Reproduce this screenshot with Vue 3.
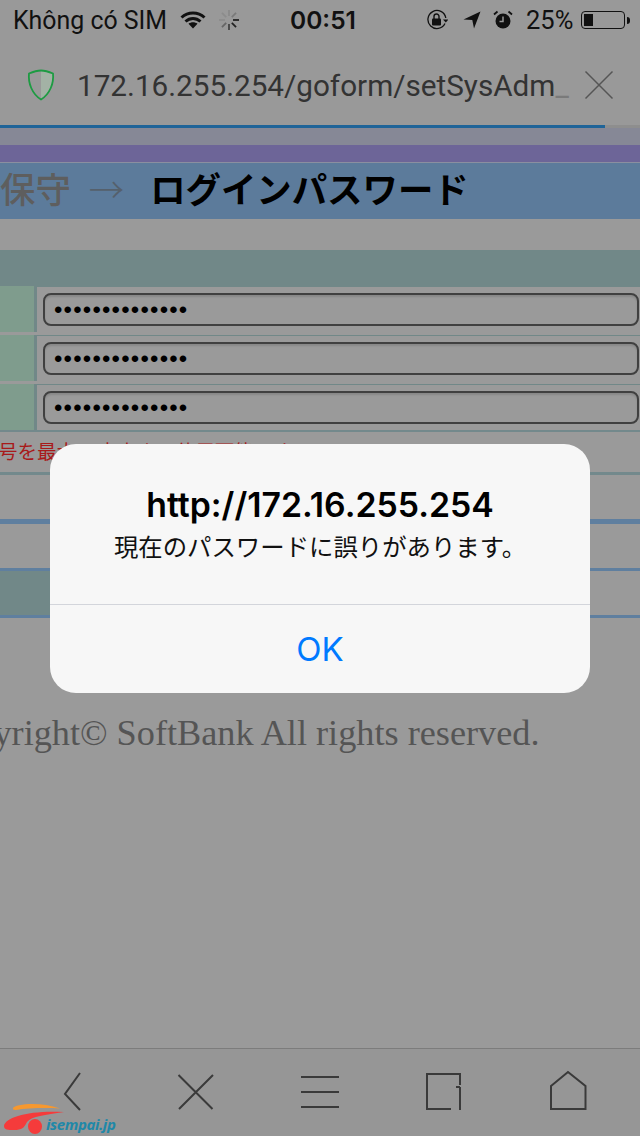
<script setup>
const rows = [1, 2, 3]
const spokes = [0, 45, 90, 135, 180, 225, 270, 315]
const spokeColors = ['#8a8a8a', '#7a7a7a', '#222', '#222', '#444', '#666', '#8c8c8c', '#8c8c8c']
</script>

<template>
  <div class="screen">
    <header class="status">
      <span class="carrier">Không có SIM</span>
      <svg class="wifi" width="26" height="18" viewBox="0 0 26 18">
        <path d="M1.500 6.500C8 .5 18 .5 24.500 6.500M5.500 10.500c4.500-4 10.500-4 15 0" fill="none" stroke="#111" stroke-width="3"/>
        <path d="M13 17.500l-4.500-4.700c2.600-2 6.400-2 9 0z" fill="#111"/>
      </svg>
      <svg class="spin" width="22" height="22" viewBox="0 0 22 22">
        <line v-for="(a, i) in spokes" :key="a" x1="11" y1="1" x2="11" y2="7" :stroke="spokeColors[i]" stroke-width="1.800" :transform="`rotate(${a} 11 11)`"/>
      </svg>
      <span class="time">00:51</span>
      <svg class="lock" width="22" height="22" viewBox="0 0 22 22">
        <path d="M19 14.500A9 9 0 1 1 19.800 9" fill="none" stroke="#111" stroke-width="1.300"/>
        <path d="M17 10.500h5.500l-2.700 3z" fill="#111"/>
        <rect x="6" y="9.500" width="9" height="7" rx="1" fill="#111"/>
        <path d="M8 10V7.500a2.500 2.500 0 0 1 5 0V10" fill="none" stroke="#111" stroke-width="1.400"/>
      </svg>
      <svg class="arrow" width="18" height="18" viewBox="0 0 18 18"><path d="M0.500 8.500L17.500 0.500L11 17.500L9.300 9z" fill="#111"/></svg>
      <svg class="alarm" width="20" height="20" viewBox="0 0 20 20">
        <circle cx="10" cy="11" r="7.500" fill="#111"/>
        <path d="M10 6.500V11.500H6.500" fill="none" stroke="#999" stroke-width="1.500"/>
        <path d="M1 4.500L4.500 1.500M19 4.500L15.500 1.500" stroke="#111" stroke-width="1.800"/>
      </svg>
      <span class="pct">25%</span>
      <span class="battery"><i></i></span>
      <span class="nub"></span>
    </header>

    <div class="urlbar">
      <svg class="shield" width="28" height="32" viewBox="0 0 28 32">
        <path d="M14 2C18 2 22 3 26 4.500C27 14 23 25 14 30.500Z" fill="#a3b2a5"/>
        <path d="M14 1.500C10 1.500 6 2.800 2 4.500C1 14 5 25 14 30.500C23 25 27 14 26 4.500C22 2.800 18 1.500 14 1.500Z" fill="none" stroke="#1d9b42" stroke-width="1.800"/>
      </svg>
      <span class="url">172.16.255.254/goform/setSysAdm<span class="fade">_</span></span>
      <svg class="close" width="30" height="30" viewBox="0 0 30 30"><path d="M1.500 1.500L28.500 28.500M28.500 1.500L1.500 28.500" stroke="#555" stroke-width="1.500"/></svg>
    </div>
    <div class="track"><div class="progress"></div></div>

    <main class="page">
      <div class="strip"></div>
      <div class="purple"></div>
      <h1 class="crumb">
        <span class="muted">保守</span>
        <span class="sep">→</span>
        <span class="current">ログインパスワード</span>
      </h1>
      <div class="spacer"></div>
      <div class="table-head"></div>
      <div v-for="r in rows" :key="r" class="row">
        <div class="label"></div>
        <div class="field"><div class="input">••••••••••••••</div></div>
      </div>
      <div class="rule teal tail"></div>
      <div class="note">号を最大15文字まで使用可能です</div>
      <div class="rule teal"></div>
      <div class="blank"></div>
      <div class="rule blue"></div>
      <div class="blank"></div>
      <div class="rule blue thin"></div>
      <div class="blank"><div class="band"></div></div>
      <div class="rule blue thin"></div>
      <p class="copy">Copyright© SoftBank All rights reserved.</p>
    </main>

    <footer class="toolbar">
      <svg width="640" height="87" viewBox="0 0 640 87" fill="none" stroke="#3a3a3a" stroke-width="2">
        <path d="M80 24L65 45L80 61"/>
        <path d="M178.500 26L212.500 60M213 26L179 60"/>
        <path d="M301 28H339M301 43H339M301 58H339"/>
        <path d="M460 36V25H427V60H451M460 38H456M460 38V61"/>
        <path d="M551 37L568 23L585.500 37V60H551Z"/>
      </svg>
    </footer>

    <div class="overlay">
      <div class="dialog">
        <div class="body">
          <div class="title">http://172.16.255.254</div>
          <div class="msg">現在のパスワードに誤りがあります。</div>
        </div>
        <div class="ok">OK</div>
      </div>
    </div>

    <div class="mark">
      <svg width="66" height="34" viewBox="0 0 66 34">
        <path d="M13 6C15 2 40-1 60 6.500C46 5.500 28 6 16 8C13 8 13 7 13 6Z" fill="#f6982f"/>
        <path d="M4 24C5 15 30 8 64 10C45 13 32 14 27 20C24 26 22 28 14 28C8 28 4 28 4 24Z" fill="#f53b3b"/>
        <ellipse cx="35" cy="24.500" rx="7" ry="7.500" fill="#f53b3b"/>
      </svg>
      <span class="mark-text">isempai.jp</span>
    </div>
  </div>
</template>

<style>
html, body { margin: 0; background: #999; }
</style>

<style scoped>
.screen {
  position: relative;
  width: 640px;
  height: 1136px;
  overflow: hidden;
  display: flex;
  flex-direction: column;
  background: #999;
  font-family: "Inter", "Noto Sans CJK JP", sans-serif;
  color: #111;
}
.status {
  height: 40px;
  display: flex;
  align-items: center;
  padding-left: 13px;
  flex: none;
}
.carrier { font-size: 24.900px; width: 167px; white-space: nowrap; font-family: Roboto, sans-serif; }
.spin { margin-left: 12px; }
.time { font-size: 24.500px; font-weight: 600; margin-left: 50px; width: 66px; white-space: nowrap; }
.lock { margin-left: 70px; }
.arrow { margin-left: 15px; }
.alarm { margin-left: 12px; }
.pct { font-size: 25.500px; margin-left: 13px; font-family: Roboto, sans-serif; width: 55px; white-space: nowrap; }
.battery {
  width: 44px;
  height: 18px;
  box-sizing: border-box;
  border: 1.500px solid #111;
  border-radius: 4px;
  padding: 2px;
  display: flex;
}
.battery i { width: 9px; background: #111; }
.nub { width: 3px; height: 7px; margin-left: 2px; background: #111; border-radius: 0 3px 3px 0; }

.urlbar {
  height: 85px;
  display: flex;
  align-items: center;
  flex: none;
  padding-left: 27px;
  box-sizing: border-box;
  padding-top: 5px;
}
.url { font-size: 29.700px; color: #333; margin-left: 22px; width: 507px; white-space: nowrap; overflow: hidden; font-family: Roboto, sans-serif; }
.fade { color: #7a7a7a; }
.close { flex: none; }
.track { height: 3px; background: #8e8e8e; flex: none; }
.progress { width: 605px; height: 100%; background: #1f6498; }

.page { flex: 1; min-height: 0; overflow: hidden; background: #9a9a9a; }
.strip { height: 17px; background: #868896; }
.purple { height: 17px; background: #6d6598; border-bottom: 1px solid #8a8fa0; }
.crumb {
  height: 56px;
  margin: 0;
  padding-bottom: 6px;
  box-sizing: border-box;
  background: #5c7b9b;
  display: flex;
  align-items: center;
  font-size: 35.400px;
  line-height: 1;
  font-weight: 700;
  white-space: nowrap;
  font-family: "Noto Sans CJK JP", sans-serif;
}
.muted { color: #5e5e5e; font-weight: 500; }
.sep { color: #55606c; font-weight: 300; margin-left: 18px; }
.current { color: #000; margin-left: 26px; font-weight: 700; }
.spacer { height: 31px; }
.table-head { height: 36px; background: #718888; }
.row { height: 46px; display: flex; gap: 3px; background: #718888; }
.row + .row { margin-top: 3px; }
.label { width: 34px; background: #7f9c8d; }
.field { flex: 1; background: #9a9a9a; padding: 7px 0 0 6px; min-width: 0; box-shadow: inset 0 1px 0 #718888; }
.input {
  height: 33px;
  box-sizing: border-box;
  border: 2px solid #404040;
  border-radius: 8px;
  margin-right: 1px;
  padding-left: 9px;
  line-height: 29px;
  font-size: 24px;
  letter-spacing: 1.200px;
  color: #000;
  white-space: nowrap;
  font-family: "Liberation Sans", sans-serif;
  box-shadow: inset 0 2px 2px rgba(0, 0, 0, 0.12);
}
.note { height: 40px; margin-left: -2px; padding-top: 7px; box-sizing: border-box; font-size: 19.500px; line-height: 24px; color: #a81a1a; white-space: nowrap; font-family: "Noto Sans CJK JP", sans-serif; }
.rule { height: 3px; }
.rule.teal { background: #73898c; }
.rule.teal.tail { height: 2px; }
.rule.blue { background: #5f7f9f; height: 5px; }
.rule.blue.thin { height: 3px; }
.blank { height: 44px; }
.band { width: 320px; height: 100%; background: #718888; }
.copy {
  margin: 95px 0 0 -67px;
  font-family: "Liberation Serif", serif;
  font-size: 36.250px;
  line-height: 40px;
  color: #555;
  white-space: nowrap;
}
.toolbar { flex: none; height: 88px; border-top: 1px solid #7c7c7c; box-sizing: border-box; background: #969696; }
.toolbar svg { display: block; }

.overlay {
  position: absolute;
  inset: 0;
  display: flex;
  align-items: center;
  justify-content: center;
}
.dialog {
  width: 540px;
  height: 249px;
  border-radius: 26px;
  background: #f7f7f7;
  display: flex;
  flex-direction: column;
  overflow: hidden;
}
.body { height: 160px; flex: none; border-bottom: 1px solid #d3d5db; text-align: center; }
.title { margin-top: 39px; font-size: 33.800px; line-height: 44px; font-weight: 600; color: #000; }
.msg { font-size: 24.400px; line-height: 32px; color: #111; margin-top: 3px; font-family: "Noto Sans CJK JP", sans-serif; }
.ok { flex: 1; display: flex; align-items: center; justify-content: center; font-size: 33px; color: #007aff; }
.mark { position: absolute; left: 0; bottom: 0; height: 34px; width: 130px; }
.mark svg { position: absolute; left: 0; top: 0; }
.mark-text {
  position: absolute;
  left: 46px;
  top: 11px;
  font-family: "Open Sans", sans-serif;
  font-size: 15px;
  letter-spacing: -0.400px;
  line-height: 22px;
  font-style: italic;
  font-weight: 700;
  color: #1f88a8;
}
</style>
